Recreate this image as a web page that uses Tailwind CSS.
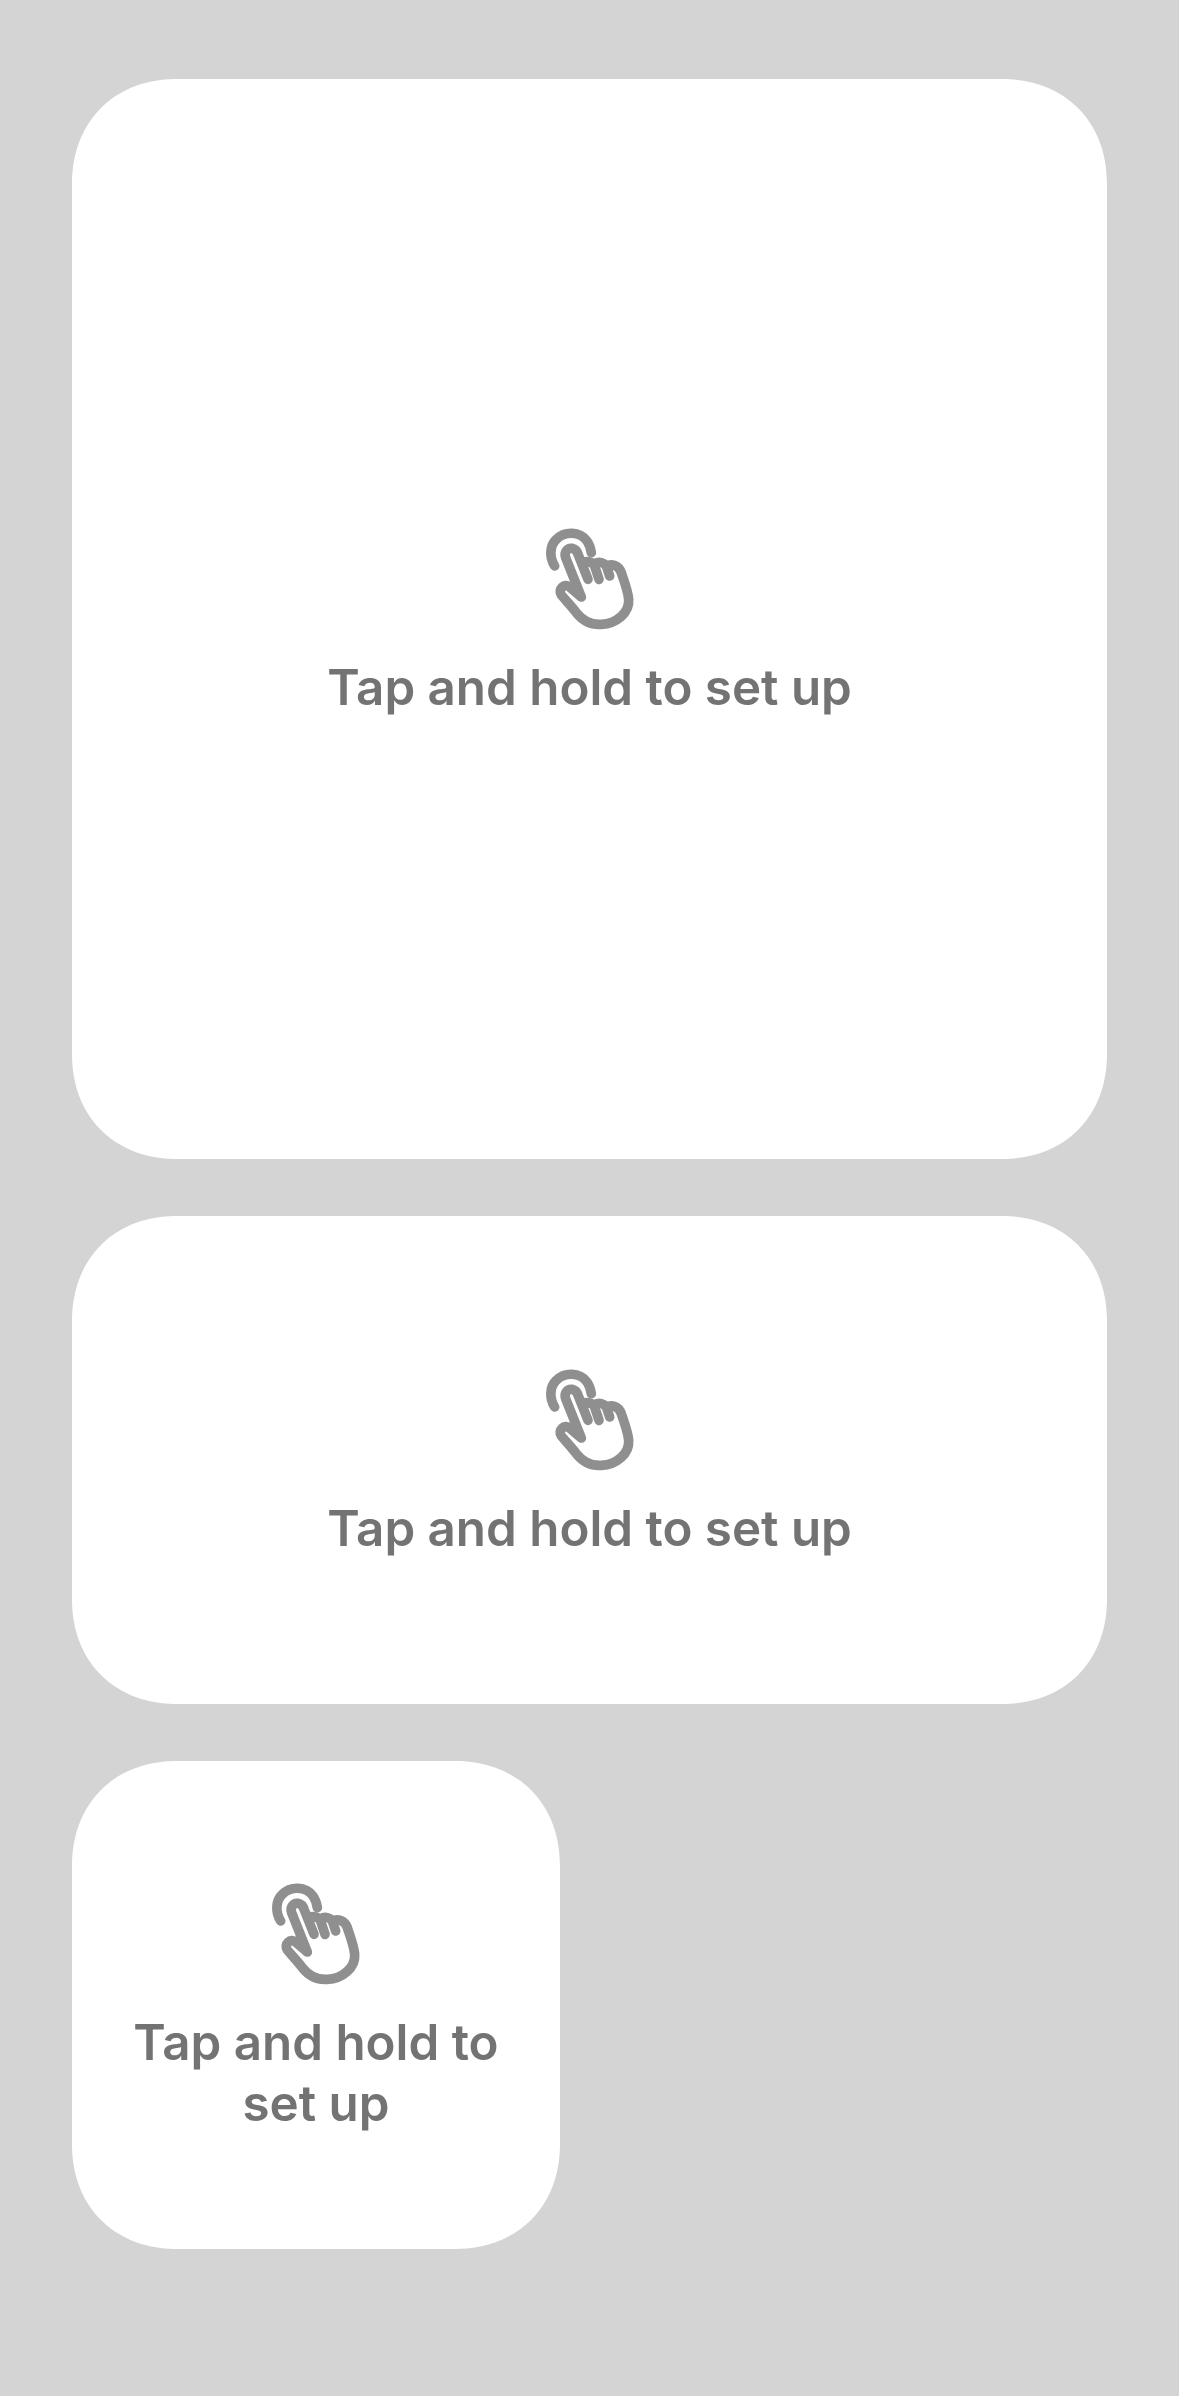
<!DOCTYPE html>
<html lang="en">
<head>
    <meta charset="UTF-8">
    <meta name="viewport" content="width=device-width, initial-scale=1.0">
    <title>Widgets</title>
    <script src="https://cdn.jsdelivr.net/npm/@tailwindcss/browser@4"></script>
</head>
<body class="bg-[#d4d4d4] min-h-screen font-['Inter',sans-serif]">
    <div class="flex flex-col gap-[57px] pt-[79px] px-[72px]">
        <!-- large -->
        <div class="bg-white h-[1080px] rounded-[105px] [corner-shape:superellipse(1.1)] flex flex-col items-center justify-center pb-[10px] px-[40px]">
            <svg class="w-[140px] h-[130px]" viewBox="-4 0 420 390" fill="none" stroke="#8f8f8f" stroke-width="29" stroke-linecap="round" stroke-linejoin="round">
                <path d="M100 165C84 140 84 105 105 85C130 60 175 60 197 90C204 100 208 112 210 125"/>
                <path d="M180 258L133 140C127 122 140 110 152 112C163 114 168 122 171 132L200 205M183 155C195 150 208 152 218 160L233 205M222 158C233 150 247 155 255 165L265 195M255 165C270 157 292 162 300 185C308 210 320 240 322 265C325 305 285 338 240 340C210 342 185 330 165 305C150 285 135 270 120 252C108 235 130 215 145 228L180 258"/>
            </svg>
            <p class="mt-[16px] text-[49.3px] leading-[61px] font-semibold text-[#737373] text-center">Tap and hold to set up</p>
        </div>
        <!-- medium -->
        <div class="bg-white h-[488px] rounded-[105px] [corner-shape:superellipse(1.1)] flex flex-col items-center justify-center pb-[10px] px-[40px]">
            <svg class="w-[140px] h-[130px]" viewBox="-4 0 420 390" fill="none" stroke="#8f8f8f" stroke-width="29" stroke-linecap="round" stroke-linejoin="round">
                <path d="M100 165C84 140 84 105 105 85C130 60 175 60 197 90C204 100 208 112 210 125"/>
                <path d="M180 258L133 140C127 122 140 110 152 112C163 114 168 122 171 132L200 205M183 155C195 150 208 152 218 160L233 205M222 158C233 150 247 155 255 165L265 195M255 165C270 157 292 162 300 185C308 210 320 240 322 265C325 305 285 338 240 340C210 342 185 330 165 305C150 285 135 270 120 252C108 235 130 215 145 228L180 258"/>
            </svg>
            <p class="mt-[16px] text-[49.3px] leading-[61px] font-semibold text-[#737373] text-center">Tap and hold to set up</p>
        </div>
        <!-- small -->
        <div class="bg-white w-[488px] h-[488px] rounded-[105px] [corner-shape:superellipse(1.1)] flex flex-col items-center justify-center pb-[10px] px-[40px]">
            <svg class="w-[140px] h-[130px]" viewBox="-4 0 420 390" fill="none" stroke="#8f8f8f" stroke-width="29" stroke-linecap="round" stroke-linejoin="round">
                <path d="M100 165C84 140 84 105 105 85C130 60 175 60 197 90C204 100 208 112 210 125"/>
                <path d="M180 258L133 140C127 122 140 110 152 112C163 114 168 122 171 132L200 205M183 155C195 150 208 152 218 160L233 205M222 158C233 150 247 155 255 165L265 195M255 165C270 157 292 162 300 185C308 210 320 240 322 265C325 305 285 338 240 340C210 342 185 330 165 305C150 285 135 270 120 252C108 235 130 215 145 228L180 258"/>
            </svg>
            <p class="mt-[16px] text-[49.3px] leading-[61px] font-semibold text-[#737373] text-center">Tap and hold to set up</p>
        </div>
    </div>
</body>
</html>
